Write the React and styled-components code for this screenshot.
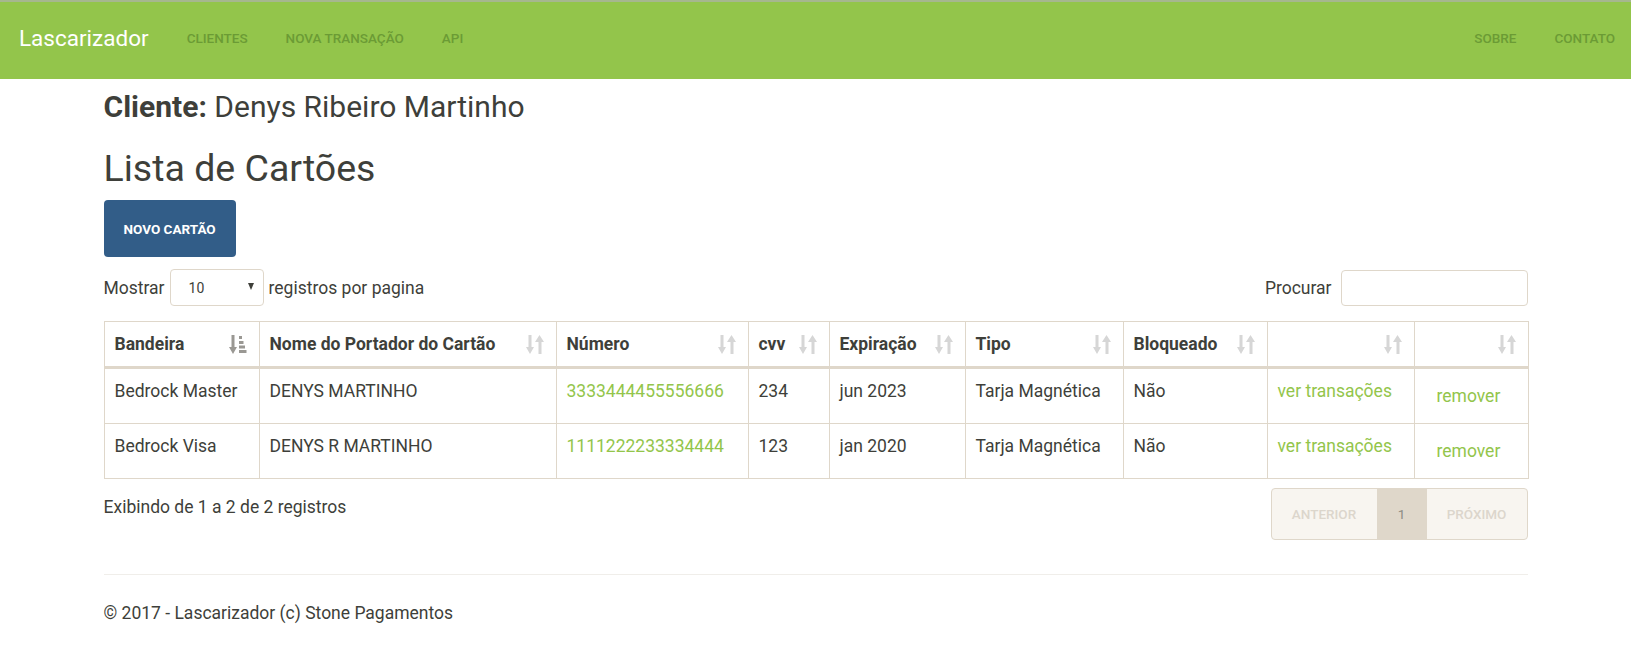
import React from 'react';
import styled, { createGlobalStyle } from 'styled-components';

const GlobalStyle = createGlobalStyle`
  body {
    margin: 0;
    font-family: Roboto, "Liberation Sans", sans-serif;
    font-size: 17.5px;
    color: #3e3f3a;
    background: #fff;
  }
`;

const Navbar = styled.nav`
  height: 77px;
  box-sizing: content-box;
  border-top: 2px solid #a6b78f;
  background: #93c54b;
  display: flex;
  align-items: center;
  padding: 0 16px 0 19px;
`;

const NavInner = styled.div`
  flex: 1;
  display: flex;
  align-items: center;
  margin-bottom: 5px;
`;

const Brand = styled.a`
  font-size: 22.5px;
  color: #fff;
  margin-right: 38px;
  text-decoration: none;
`;

const NavGroup = styled.div`
  display: flex;
  gap: 38px;
  margin-left: ${p => (p.$right ? 'auto' : '0')};
`;

const NavLink = styled.a`
  font-size: 13.5px;
  font-weight: 500;
  text-transform: uppercase;
  color: #6b9b35;
  text-decoration: none;
`;

const Container = styled.main`
  width: 1424px;
  margin: 0 auto;
`;

const ClientTitle = styled.h4`
  margin: 11px 0 0;
  font-size: 30px;
  line-height: 33px;
  font-weight: 400;
  b {
    font-weight: 700;
  }
`;

const PageTitle = styled.h2`
  margin: 25px 0 0;
  font-size: 37.5px;
  line-height: 41px;
  font-weight: 400;
`;

const PrimaryButton = styled.button`
  margin-top: 11px;
  height: 57px;
  padding: 0 20px;
  border: none;
  border-radius: 4px;
  background: #325d88;
  color: #fff;
  font-family: inherit;
  font-size: 13.5px;
  font-weight: 700;
  text-transform: uppercase;
`;

const Controls = styled.div`
  margin-top: 12px;
  display: flex;
  justify-content: space-between;
  align-items: center;
  height: 37px;
`;

const ControlGroup = styled.label`
  display: flex;
  align-items: center;
  gap: ${p => p.$gap || 5}px;
`;

const SelectWrap = styled.div`
  position: relative;
  width: 94px;
  height: 37px;
`;

const Select = styled.select`
  appearance: none;
  width: 100%;
  height: 100%;
  padding: 0 0 0 18px;
  border: 1px solid #dfd7ca;
  border-radius: 4px;
  background: #fff;
  color: #3e3f3a;
  font-family: inherit;
  font-size: 14px;
`;

const Caret = styled.span`
  position: absolute;
  right: 10px;
  top: 14px;
  width: 0;
  height: 0;
  border-left: 3.5px solid transparent;
  border-right: 3.5px solid transparent;
  border-top: 7px solid #3e3f3a;
  pointer-events: none;
`;

const SearchInput = styled.input`
  width: 187px;
  height: 36px;
  box-sizing: border-box;
  border: 1px solid #dfd7ca;
  border-radius: 4px;
`;

const Table = styled.table`
  margin-top: 15px;
  width: 100%;
  table-layout: fixed;
  border-collapse: collapse;
  border: 1px solid #dfd7ca;
`;

const Th = styled.th`
  padding: 10px 12px 10px 10px;
  border: 1px solid #dfd7ca;
  border-bottom: 3px solid #dfd7ca;
  text-align: left;
  font-weight: 700;
  line-height: 24px;
`;

const HeadInner = styled.div`
  display: flex;
  justify-content: space-between;
  align-items: center;
  white-space: nowrap;
`;

const Td = styled.td`
  padding: 10px;
  border: 1px solid #dfd7ca;
  vertical-align: top;
  line-height: 24px;
  white-space: nowrap;
`;

const Link = styled.a`
  color: #93c54b;
  text-decoration: none;
`;

const RemoveButton = styled.button`
  padding: 5px 12px;
  border: none;
  background: none;
  color: #93c54b;
  font-family: inherit;
  font-size: 17.5px;
  line-height: 24px;
`;

const InfoRow = styled.div`
  margin-top: 9px;
  display: flex;
  justify-content: space-between;
  align-items: flex-start;
`;

const InfoText = styled.div`
  padding-top: 7px;
  line-height: 25px;
`;

const Pagination = styled.div`
  display: flex;
  height: 50px;
  border: 1px solid #dfd7ca;
  border-radius: 4px;
  overflow: hidden;
  background: #f8f5f0;
`;

const PageItem = styled.span`
  width: ${p => p.$w}px;
  display: flex;
  align-items: center;
  justify-content: center;
  font-size: 13.5px;
  font-weight: ${p => (p.$active ? 400 : 500)};
  text-transform: uppercase;
  color: ${p => (p.$active ? '#8e8c84' : '#dcd6cc')};
  background: ${p => (p.$active ? '#dfd7ca' : 'transparent')};
`;

const Rule = styled.hr`
  margin: 34px 0 0;
  border: none;
  border-top: 1px solid #f0eeea;
`;

const Footer = styled.footer`
  margin-top: 26px;
  line-height: 25px;
`;

const SortIcon = ({ active }) => (
  <svg width="18" height="19" viewBox="0 0 18 19" fill={active ? '#9a9893' : '#d6d6d6'}>
    <path d="M2.5 0h3v12h2.5L4 19 0 12h2.5z" />
    {active ? (
      <g>
        <rect x="10" y="1" width="3" height="3" />
        <rect x="10" y="6" width="4.5" height="3" />
        <rect x="10" y="10.5" width="6" height="3" />
        <rect x="10" y="15" width="7.5" height="3" />
      </g>
    ) : (
      <path d="M13.5 0L18 7h-2.5v12h-3V7H9z" />
    )}
  </svg>
);

const columns = [
  { label: 'Bandeira', width: 155, active: true },
  { label: 'Nome do Portador do Cartão', width: 297 },
  { label: 'Número', width: 192 },
  { label: 'cvv', width: 81 },
  { label: 'Expiração', width: 136 },
  { label: 'Tipo', width: 158 },
  { label: 'Bloqueado', width: 144 },
  { label: '', width: 147 },
  { label: '', width: 114 },
];

const cards = [
  { brand: 'Bedrock Master', holder: 'DENYS MARTINHO', number: '3333444455556666', cvv: '234', exp: 'jun 2023' },
  { brand: 'Bedrock Visa', holder: 'DENYS R MARTINHO', number: '1111222233334444', cvv: '123', exp: 'jan 2020' },
];

const App = () => (
  <>
    <GlobalStyle />
    <Navbar>
      <NavInner>
        <Brand href="#">Lascarizador</Brand>
        <NavGroup>
          <NavLink href="#">Clientes</NavLink>
          <NavLink href="#">Nova Transação</NavLink>
          <NavLink href="#">API</NavLink>
        </NavGroup>
        <NavGroup $right>
          <NavLink href="#">Sobre</NavLink>
          <NavLink href="#">Contato</NavLink>
        </NavGroup>
      </NavInner>
    </Navbar>
    <Container>
      <ClientTitle><b>Cliente:</b> Denys Ribeiro Martinho</ClientTitle>
      <PageTitle>Lista de Cartões</PageTitle>
      <PrimaryButton>Novo Cartão</PrimaryButton>
      <Controls>
        <ControlGroup>
          Mostrar
          <SelectWrap>
            <Select defaultValue="10">
              <option>10</option>
              <option>25</option>
              <option>50</option>
            </Select>
            <Caret />
          </SelectWrap>
          registros por pagina
        </ControlGroup>
        <ControlGroup $gap={9}>
          Procurar
          <SearchInput type="text" />
        </ControlGroup>
      </Controls>
      <Table>
        <colgroup>
          {columns.map((c, i) => (
            <col key={i} style={{ width: c.width }} />
          ))}
        </colgroup>
        <thead>
          <tr>
            {columns.map((c, i) => (
              <Th key={i}>
                <HeadInner>
                  <span>{c.label}</span>
                  <SortIcon active={c.active} />
                </HeadInner>
              </Th>
            ))}
          </tr>
        </thead>
        <tbody>
          {cards.map(card => (
            <tr key={card.number}>
              <Td>{card.brand}</Td>
              <Td>{card.holder}</Td>
              <Td><Link href="#">{card.number}</Link></Td>
              <Td>{card.cvv}</Td>
              <Td>{card.exp}</Td>
              <Td>Tarja Magnética</Td>
              <Td>Não</Td>
              <Td><Link href="#">ver transações</Link></Td>
              <Td><RemoveButton>remover</RemoveButton></Td>
            </tr>
          ))}
        </tbody>
      </Table>
      <InfoRow>
        <InfoText>Exibindo de 1 a 2 de 2 registros</InfoText>
        <Pagination>
          <PageItem $w={105}>Anterior</PageItem>
          <PageItem $w={50} $active>1</PageItem>
          <PageItem $w={100}>Próximo</PageItem>
        </Pagination>
      </InfoRow>
      <Rule />
      <Footer>© 2017 - Lascarizador (c) Stone Pagamentos</Footer>
    </Container>
  </>
);

export default App;
